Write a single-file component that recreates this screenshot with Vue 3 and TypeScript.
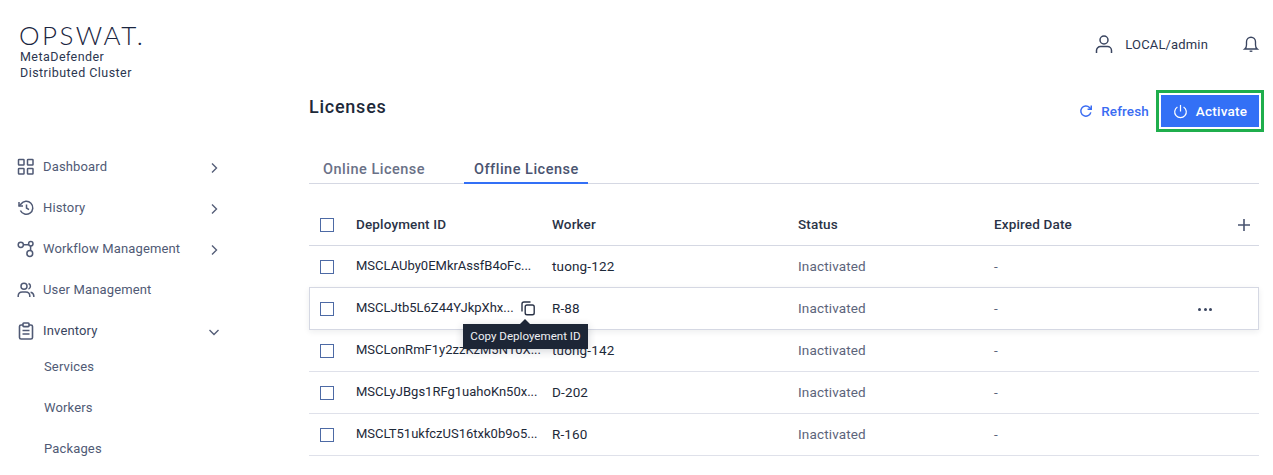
<script setup lang="ts">
interface Row { id: string; worker: string; hover?: boolean }
const rows: Row[] = [
  { id: 'MSCLAUby0EMkrAssfB4oFc...', worker: 'tuong-122' },
  { id: 'MSCLJtb5L6Z44YJkpXhx...', worker: 'R-88', hover: true },
  { id: 'MSCLonRmF1y2zzKzM5N10X...', worker: 'tuong-142' },
  { id: 'MSCLyJBgs1RFg1uahoKn50x...', worker: 'D-202' },
  { id: 'MSCLT51ukfczUS16txk0b9o5...', worker: 'R-160' },
]
</script>

<template>
  <div class="page">
    <aside class="side">
      <div class="brand">
        <div class="logo">OPSWAT.</div>
        <div class="product">MetaDefender<br />Distributed Cluster</div>
      </div>
      <nav class="nav">
        <div class="item">
          <svg class="ic" viewBox="0 0 18 18"><g fill="none" stroke="currentColor" stroke-width="1.5"><rect x="1.5" y="1.5" width="5.5" height="5.5" rx=".6"/><rect x="10.5" y="1.5" width="5.5" height="5.5" rx=".6"/><rect x="1.5" y="10.5" width="5.5" height="5.5" rx=".6"/><rect x="10.5" y="10.5" width="5.5" height="5.5" rx=".6"/></g></svg>
          <span class="lb">Dashboard</span>
          <svg class="chev" viewBox="0 0 12 12"><path d="M4 1.5 8.5 6 4 10.5" fill="none" stroke="currentColor" stroke-width="1.4"/></svg>
        </div>
        <div class="item">
          <svg class="ic" viewBox="0 0 18 18"><g fill="none" stroke="currentColor" stroke-width="1.5"><path d="M3.4 11.5A6.5 6.5 0 1 0 4 5L2 7"/><path d="M2 3v4h4"/><path d="M9.5 5.5V9l2.5 1.6"/></g></svg>
          <span class="lb">History</span>
          <svg class="chev" viewBox="0 0 12 12"><path d="M4 1.5 8.5 6 4 10.5" fill="none" stroke="currentColor" stroke-width="1.4"/></svg>
        </div>
        <div class="item">
          <svg class="ic" viewBox="0 0 18 18"><g fill="none" stroke="currentColor" stroke-width="1.5"><circle cx="3.8" cy="4.8" r="2.6"/><circle cx="13.8" cy="3.8" r="2.2"/><circle cx="12.8" cy="13.5" r="2.9"/><path d="M6.4 4.8h5.2M13.6 6v4.7"/></g></svg>
          <span class="lb">Workflow Management</span>
          <svg class="chev" viewBox="0 0 12 12"><path d="M4 1.5 8.5 6 4 10.5" fill="none" stroke="currentColor" stroke-width="1.4"/></svg>
        </div>
        <div class="item">
          <svg class="ic" viewBox="0 0 18 18"><g fill="none" stroke="currentColor" stroke-width="1.5"><circle cx="7" cy="5.3" r="3"/><path d="M1.2 16v-1.2A4 4 0 0 1 5.2 11h3.6a4 4 0 0 1 4 3.8V16"/><path d="M11.5 2.5a3 3 0 0 1 0 5.6M13.6 11.2a4 4 0 0 1 3.2 3.7V16"/></g></svg>
          <span class="lb">User Management</span>
        </div>
        <div class="item">
          <svg class="ic" viewBox="0 0 18 18"><g fill="none" stroke="currentColor" stroke-width="1.6"><rect x="2.5" y="3" width="13" height="14" rx="1.6"/><rect x="6" y="1" width="6" height="3.6" rx=".8" fill="#fff"/><path d="M5.5 8.5h7M5.5 12h7"/></g></svg>
          <span class="lb dark">Inventory</span>
          <svg class="chev" viewBox="0 0 12 12"><path d="M1.5 4 6 8.5 10.5 4" fill="none" stroke="currentColor" stroke-width="1.4"/></svg>
        </div>
        <div class="sub first">Services</div>
        <div class="sub">Workers</div>
        <div class="sub">Packages</div>
      </nav>
    </aside>

    <div class="right">
      <header class="top">
        <svg class="user" viewBox="0 0 20 20"><g fill="none" stroke="currentColor" stroke-width="1.5"><circle cx="10" cy="6" r="4"/><path d="M2.5 19v-2.500a4 4 0 0 1 4-4h7a4 4 0 0 1 4 4V19"/></g></svg>
        <span class="uname">LOCAL/admin</span>
        <svg class="bell" viewBox="0 0 20 20"><g fill="none" stroke="currentColor" stroke-width="1.5"><path d="M3 15.500c1.300-1 2-2.500 2-4.500V7.500a5 5 0 0 1 10 0V11c0 2 .7 3.500 2 4.500z"/><path d="M8.500 18h3"/></g></svg>
      </header>

      <main class="main">
        <div class="title-row">
          <h1>Licenses</h1>
          <button class="refresh">
            <svg viewBox="0 0 16 16"><g fill="none" stroke="currentColor" stroke-width="1.7"><path d="M13.500 9.500A5.800 5.800 0 1 1 12 4l1.600 1.700"/><path d="M14 1.800v4.200H9.800"/></g></svg>
            Refresh
          </button>
          <button class="activate">
            <svg viewBox="0 0 16 16"><g fill="none" stroke="currentColor" stroke-width="1.300"><path d="M8 1v7"/><path d="M4.700 3.200a6.200 6.200 0 1 0 6.600 0"/></g></svg>
            Activate
          </button>
        </div>

        <div class="tabs">
          <div class="tab">Online License</div>
          <div class="tab on">Offline License</div>
        </div>

        <div class="table">
          <div class="tr head">
            <span class="box"></span>
            <span class="c1">Deployment ID</span>
            <span class="c2">Worker</span>
            <span class="c3">Status</span>
            <span class="c4">Expired Date</span>
            <svg class="plus" viewBox="0 0 12 12"><path d="M6 0v12M0 6h12" fill="none" stroke="currentColor" stroke-width="1.600"/></svg>
          </div>
          <div v-for="r in rows" :key="r.id" class="tr" :class="{ hover: r.hover }">
            <span class="box"></span>
            <span class="c1 idcell">
              {{ r.id }}
              <span v-if="r.hover" class="copy">
                <svg viewBox="0 0 16 16"><g fill="none" stroke="currentColor" stroke-width="1.400"><rect x="5.200" y="5" width="9" height="9.800" rx="1.800"/><path d="M10.500 2H4a2 2 0 0 0-2 2v7.500"/></g></svg>
                <span class="tip">Copy Deployement ID</span>
              </span>
            </span>
            <span class="c2">{{ r.worker }}</span>
            <span class="c3 mute">Inactivated</span>
            <span class="c4 mute">-</span>
            <span v-if="r.hover" class="dots"><i></i><i></i><i></i></span>
          </div>
        </div>
      </main>
    </div>
  </div>
</template>

<style>
html, body { margin: 0; height: 475px; overflow: hidden; background: #fff; }
</style>

<style scoped>
.page {
  display: flex;
  width: 1273px;
  height: 475px;
  overflow: hidden;
  font-family: Roboto, "Noto Sans", sans-serif;
  font-size: 13.500px;
  letter-spacing: .15px;
  color: #1d2939;
}
.side { width: 240px; flex: none; }
.brand { padding: 22px 0 0 19px; height: 137px; box-sizing: border-box; }
.logo {
  font-family: Lato, sans-serif;
  font-weight: 300;
  font-size: 26px;
  line-height: 26px;
  letter-spacing: 2.400px;
  color: #1a2540;
}
.product { font-size: 12.500px; line-height: 15.500px; margin: 1px 0 0 1px; letter-spacing: .45px; color: #2c3650; }
.nav { margin-top: 9px; color: #505a75; font-size: 13px; }
.item { display: flex; align-items: center; height: 41px; padding-left: 17px; }
.ic { width: 18px; height: 18px; margin-right: 8px; flex: none; }
.lb { flex: 1; }
.lb.dark { color: #3a4560; }
.chev { width: 12px; height: 12px; margin: 2px 20px 0 0; color: #555e78; }
.sub { height: 41px; line-height: 41px; padding-left: 44px; }
.sub.first { margin-top: -5px; }
.right { flex: 1; min-width: 0; }
.top {
  display: flex;
  align-items: center;
  height: 88px;
  padding-right: 13px;
  justify-content: flex-end;
  color: #3a4560;
}
.user { width: 20px; height: 20px; margin-right: 11px; }
.uname { font-size: 13px; margin-right: 34px; color: #2c3650; }
.bell { width: 18px; height: 20px; }
.main { padding: 0 14px 0 69px; }
.title-row { display: flex; align-items: center; height: 32px; margin-top: 7px; }
h1 { margin: 0 0 10px; font-size: 18px; font-weight: 500; letter-spacing: .75px; flex: 1; color: #1d2939; }
button { font: inherit; letter-spacing: inherit; border: 0; background: none; display: flex; align-items: center; }
.refresh { color: #3a6cf2; gap: 8px; padding: 0; margin-right: 12px; font-weight: 500; }
.refresh svg { width: 14px; height: 14px; }
.activate {
  width: 98px;
  height: 32px;
  box-sizing: border-box;
  justify-content: center;
  gap: 8px;
  background: #3370f6;
  color: #fff;
  font-weight: 500;
  letter-spacing: .25px;
  outline: 3px solid #1fae4c;
  outline-offset: 2px;
}
.activate svg { width: 15px; height: 15px; }
.tabs {
  display: flex;
  margin-top: 18px;
  height: 39px;
  box-sizing: border-box;
  border-bottom: 1px solid #d5d8e3;
  font-size: 14.500px;
  letter-spacing: .5px;
  font-weight: 500;
  color: #6a7187;
  white-space: nowrap;
}
.tab { padding: 16px 14px 0; height: 39px; box-sizing: border-box; margin-right: 11px; width: 144px; }
.tab.on { width: 124px; padding-left: 10px; padding-right: 0; color: #4a5470; border-bottom: 2px solid #3370f6; }
.table { margin-top: 20px; }
.tr {
  display: flex;
  align-items: center;
  height: 42px;
  box-sizing: border-box;
  border-bottom: 1px solid #dfe1ea;
  position: relative;
}
.tr.head { font-weight: 500; border-bottom-color: #d5d8e3; color: #2a3347; }
.tr.hover { border: 1px solid #d5d8e3; margin-top: -1px; height: 43px; box-shadow: 0 2px 6px rgba(29, 41, 57, .08); z-index: 1; }
.box { width: 14px; height: 14px; box-sizing: border-box; border: 1px solid #4d6aa5; margin-left: 11px; flex: none; }
.tr.hover .box { margin-left: 10px; }
.c1 { width: 196px; margin: 0 0 2px 22px; flex: none; position: relative; white-space: nowrap; }
.idcell { font-size: 13px; letter-spacing: 0; }
.c2 { width: 246px; flex: none; margin-bottom: 2px; }
.c3 { width: 196px; flex: none; margin-bottom: 2px; }
.c4 { margin-bottom: 2px; }
.mute { color: #5c647b; }
.copy { position: absolute; left: 164px; top: 0; width: 16px; height: 16px; color: #2a3347; }
.copy svg { width: 16px; height: 16px; display: block; }
.tip {
  position: absolute;
  left: -57px;
  top: 24px;
  width: 125px;
  height: 25px;
  line-height: 25px;
  text-align: center;
  background: #1d2636;
  color: #eef0f4;
  font-size: 11.600px;
  letter-spacing: 0;
  box-shadow: 0 2px 8px rgba(29, 41, 57, .2);
}
.tip::before {
  content: "";
  position: absolute;
  left: 57px;
  top: -5px;
  border: 5px solid transparent;
  border-top: 0;
  border-bottom-color: #1d2636;
}
.plus { position: absolute; right: 9px; top: 15px; width: 12px; height: 12px; color: #4a5470; }
.dots { position: absolute; right: 46px; top: 20px; display: flex; gap: 2.500px; }
.dots i { width: 3px; height: 3px; border-radius: 50%; background: #3a4560; }
</style>
